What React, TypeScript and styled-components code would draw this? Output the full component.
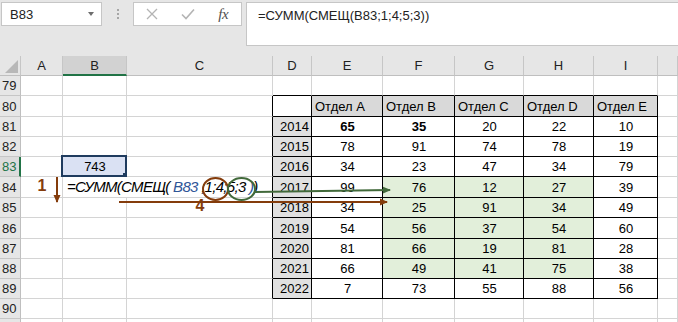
import React from "react";
import styled, { createGlobalStyle } from "styled-components";

const Global = createGlobalStyle`
  html, body { margin: 0; padding: 0; background: #ffffff; }
  body { font-family: "Liberation Sans", Arial, sans-serif; overflow: hidden; }
`;

const GRID = "#d4d4d4";
const BLACK = "#000000";
const BROWN = "#843c0c";
const GREEN = "#41693a";
const XL_GREEN = "#217346";
const HEAD_BG = "#e6e6e6";

const Page = styled.div`
  position: relative;
  width: 678px;
  height: 322px;
  overflow: hidden;
  background: #ffffff;
`;

const TopBar = styled.div`
  display: flex;
  align-items: flex-start;
  height: 56px;
  box-sizing: border-box;
  padding: 2px 0 0 1px;
  background: ${HEAD_BG};
`;

const NameBox = styled.div`
  box-sizing: border-box;
  width: 101px;
  height: 24px;
  background: #fff;
  border: 1px solid #c6c6c6;
  display: flex;
  align-items: center;
  justify-content: space-between;
  padding: 0 7px 0 8px;
  font-size: 13px;
  color: #222;
`;

const Caret = styled.span`
  width: 0;
  height: 0;
  border-left: 3.5px solid transparent;
  border-right: 3.5px solid transparent;
  border-top: 4px solid #6d6d6d;
`;

const Dots = styled.div`
  width: 31px;
  height: 24px;
  display: flex;
  flex-direction: column;
  align-items: center;
  justify-content: center;
  gap: 2px;
`;

const Dot = styled.span`
  width: 2px;
  height: 2px;
  background: #a6a6a6;
`;

const FnBox = styled.div`
  box-sizing: border-box;
  width: 109px;
  height: 24px;
  background: #fff;
  border: 1px solid #c6c6c6;
  display: flex;
  align-items: center;
`;

const FnSlot = styled.div`
  width: 36px;
  height: 22px;
  display: flex;
  align-items: center;
  justify-content: center;
`;

const Fx = styled.span`
  font-family: "Liberation Serif", "Times New Roman", serif;
  font-style: italic;
  font-size: 15px;
  color: #4f4f4f;
  letter-spacing: -0.5px;
`;

const FormulaBox = styled.div`
  box-sizing: border-box;
  margin-left: 4px;
  flex: 1;
  height: 44px;
  margin-right: -2px;
  background: #fff;
  border: 1px solid #c6c6c6;
  padding: 5px 0 0 11px;
  font-size: 13px;
  color: #222;
`;

const Sheet = styled.div`
  display: grid;
  grid-template-columns: 21px 42px 64px 146px 39px 71px 72px 69px 70px 64px 1fr;
`;

const ColHead = styled.div<{ $active?: boolean }>`
  box-sizing: border-box;
  height: 20px;
  background: ${(p) => (p.$active ? "#d2d2d2" : HEAD_BG)};
  border-right: 1px solid #c6c6c6;
  border-bottom: ${(p) => (p.$active ? `2px solid ${XL_GREEN}` : "1px solid #bfbfbf")};
  display: flex;
  align-items: center;
  justify-content: center;
  font-size: 13px;
  color: #222;
`;

const Corner = styled(ColHead)`
  position: relative;
  &::after {
    content: "";
    position: absolute;
    right: 2px;
    bottom: 2px;
    width: 0;
    height: 0;
    border-left: 13px solid transparent;
    border-bottom: 13px solid #b8b8b8;
  }
`;

const RowHead = styled.div<{ $h: number; $active?: boolean }>`
  box-sizing: border-box;
  height: ${(p) => p.$h}px;
  background: ${(p) => (p.$active ? "#dcdcdc" : HEAD_BG)};
  border-right: ${(p) => (p.$active ? `2px solid ${XL_GREEN}` : "1px solid #bfbfbf")};
  border-bottom: 1px solid #c6c6c6;
  display: flex;
  align-items: center;
  padding-left: 2px;
  font-size: 13px;
  color: ${(p) => (p.$active ? XL_GREEN : "#222")};
  overflow: hidden;
`;

type Align = "left" | "center" | "right";

const Cell = styled.div<{
  $h: number;
  $align?: Align;
  $bold?: boolean;
  $fill?: string;
  $rb?: string;
  $bb?: string;
  $color?: string;
  $span?: number;
}>`
  box-sizing: border-box;
  height: ${(p) => p.$h}px;
  grid-column: ${(p) => (p.$span ? `span ${p.$span}` : "auto")};
  background: ${(p) => p.$fill || "#fff"};
  border-right: 1px solid ${(p) => p.$rb || GRID};
  border-bottom: 1px solid ${(p) => p.$bb || GRID};
  display: flex;
  align-items: flex-end;
  justify-content: ${(p) =>
    p.$align === "right" ? "flex-end" : p.$align === "center" ? "center" : "flex-start"};
  padding: 0 2px 2px 3px;
  font-size: 13px;
  font-weight: ${(p) => (p.$bold ? 700 : 400)};
  color: ${(p) => p.$color || "#000"};
  white-space: nowrap;
  overflow: visible;
  position: relative;
`;

const Selected = styled.span`
  position: absolute;
  left: -2px;
  top: -2px;
  right: -1px;
  bottom: -1px;
  border: 2px solid #1f3b5e;
  pointer-events: none;
  &::after {
    content: "";
    position: absolute;
    right: -3px;
    bottom: -3px;
    width: 5px;
    height: 5px;
    background: #1f3b5e;
  }
`;

const Big = styled.span`
  font-size: 16px;
  font-weight: 700;
  color: ${BROWN};
`;

const Formula = styled.span`
  font-size: 15px;
  font-style: italic;
  letter-spacing: -0.7px;
  color: #000;
  padding-left: 1px;
`;

const Ref = styled.span`
  color: #2f5597;
`;

const Overlay = styled.svg`
  position: absolute;
  left: 0;
  top: 0;
  pointer-events: none;
`;

const HEIGHTS: Record<number, number> = {
  79: 20, 80: 21, 81: 20, 82: 20, 83: 20, 84: 21, 85: 20, 86: 21, 87: 20, 88: 20, 89: 20, 90: 20, 91: 20,
};

const DATA: Record<number, number[]> = {
  2014: [65, 35, 20, 22, 10],
  2015: [78, 91, 74, 78, 19],
  2016: [34, 23, 47, 34, 79],
  2017: [99, 76, 12, 27, 39],
  2018: [34, 25, 91, 34, 49],
  2019: [54, 56, 37, 54, 60],
  2020: [81, 66, 19, 81, 28],
  2021: [66, 49, 41, 75, 38],
  2022: [7, 73, 55, 88, 56],
};

const COLS = ["A", "B", "C", "D", "E", "F", "G", "H", "I", "J"];
const DEPTS = ["Отдел A", "Отдел B", "Отдел C", "Отдел D", "Отдел E"];

function renderRow(r: number) {
  const h = HEIGHTS[r];
  const out: React.ReactNode[] = [];
  out.push(
    <RowHead key={`h${r}`} $h={h} $active={r === 83}>
      {r <= 90 ? r : ""}
    </RowHead>
  );
  const inTable = r >= 80 && r <= 89;
  const year = 2014 + (r - 81);
  for (let c = 0; c < COLS.length; c++) {
    const key = `${r}-${c}`;
    const col = COLS[c];
    if (r === 84 && col === "C") continue;
    let rb: string | undefined;
    let bb: string | undefined;
    if (inTable && c >= 2 && c <= 8) rb = BLACK;
    if (inTable && c >= 3 && c <= 8) bb = BLACK;
    if (r === 79 && c >= 3 && c <= 8) bb = BLACK;

    if (r === 84 && col === "A") {
      out.push(
        <Cell key={key} $h={h} $align="center" $rb={rb} $bb={bb}>
          <Big>1</Big>
        </Cell>
      );
      continue;
    }
    if (r === 84 && col === "B") {
      out.push(
        <Cell key={key} $h={h} $span={2} $rb={BLACK}>
          <Formula>
            =СУММ(СМЕЩ( <Ref>B83</Ref> ;1;4;5;3 <Ref>)</Ref>)
          </Formula>
        </Cell>
      );
      continue;
    }
    if (r === 85 && col === "C") {
      out.push(
        <Cell key={key} $h={h} $align="center" $rb={rb} $bb={bb}>
          <Big>4</Big>
        </Cell>
      );
      continue;
    }
    if (r === 83 && col === "B") {
      out.push(
        <Cell key={key} $h={h} $align="center" $fill="#dae1f3">
          743
          <Selected />
        </Cell>
      );
      continue;
    }
    if (r === 80 && c >= 4 && c <= 8) {
      out.push(
        <Cell key={key} $h={h} $fill="#d9d9d9" $rb={rb} $bb={bb}>
          {DEPTS[c - 4]}
        </Cell>
      );
      continue;
    }
    if (r >= 81 && r <= 89 && col === "D") {
      out.push(
        <Cell key={key} $h={h} $align="right" $fill="#e0e0e0" $rb={rb} $bb={bb}>
          {year}
        </Cell>
      );
      continue;
    }
    if (r >= 81 && r <= 89 && c >= 4 && c <= 8) {
      const v = DATA[year][c - 4];
      const green = r >= 84 && r <= 88 && c >= 5 && c <= 7;
      out.push(
        <Cell
          key={key}
          $h={h}
          $align="center"
          $bold={r === 81 && c <= 5}
          $fill={green ? "#e2efda" : undefined}
          $rb={rb}
          $bb={bb}
        >
          {v}
        </Cell>
      );
      continue;
    }
    out.push(<Cell key={key} $h={h} $rb={rb} $bb={bb} />);
  }
  return out;
}

export default function App() {
  const rows = [79, 80, 81, 82, 83, 84, 85, 86, 87, 88, 89, 90, 91];
  return (
    <Page>
      <Global />
      <TopBar>
        <NameBox>
          <span>B83</span>
          <Caret />
        </NameBox>
        <Dots>
          <Dot />
          <Dot />
          <Dot />
        </Dots>
        <FnBox>
          <FnSlot>
            <svg width="12" height="12" viewBox="0 0 12 12">
              <path d="M1 1 L11 11 M11 1 L1 11" stroke="#b4b4b4" strokeWidth="1.3" fill="none" />
            </svg>
          </FnSlot>
          <FnSlot>
            <svg width="14" height="12" viewBox="0 0 14 12">
              <path d="M1 6.5 L5 10.5 L13 1.5" stroke="#b4b4b4" strokeWidth="1.6" fill="none" />
            </svg>
          </FnSlot>
          <FnSlot>
            <Fx>fx</Fx>
          </FnSlot>
        </FnBox>
        <FormulaBox>=СУММ(СМЕЩ(B83;1;4;5;3))</FormulaBox>
      </TopBar>
      <Sheet>
        <Corner />
        {COLS.map((c) => (
          <ColHead key={c} $active={c === "B"}>
            {c === "J" ? "" : c}
          </ColHead>
        ))}
        {rows.map((r) => renderRow(r))}
      </Sheet>
      <Overlay width="678" height="322" viewBox="0 0 678 322">
        <defs>
          <marker id="ab" markerWidth="8" markerHeight="8" refX="7" refY="4" orient="auto" markerUnits="userSpaceOnUse">
            <path d="M0 0.5 L8 4 L0 7.5 Z" fill={BROWN} />
          </marker>
          <marker id="ag" markerWidth="8" markerHeight="8" refX="7" refY="4" orient="auto" markerUnits="userSpaceOnUse">
            <path d="M0 0.5 L8 4 L0 7.5 Z" fill={GREEN} />
          </marker>
        </defs>
        <line x1="57" y1="177" x2="57" y2="202" stroke={BROWN} strokeWidth="2" markerEnd="url(#ab)" />
        <ellipse cx="215.5" cy="189" rx="12.5" ry="11" fill="none" stroke={BROWN} strokeWidth="2" />
        <ellipse cx="241.5" cy="189" rx="13.5" ry="11" fill="none" stroke={GREEN} strokeWidth="2" />
        <line x1="255" y1="192" x2="390" y2="190" stroke={GREEN} strokeWidth="2" markerEnd="url(#ag)" />
        <line x1="119" y1="202" x2="387" y2="202" stroke={BROWN} strokeWidth="2" markerEnd="url(#ab)" />
      </Overlay>
    </Page>
  );
}
